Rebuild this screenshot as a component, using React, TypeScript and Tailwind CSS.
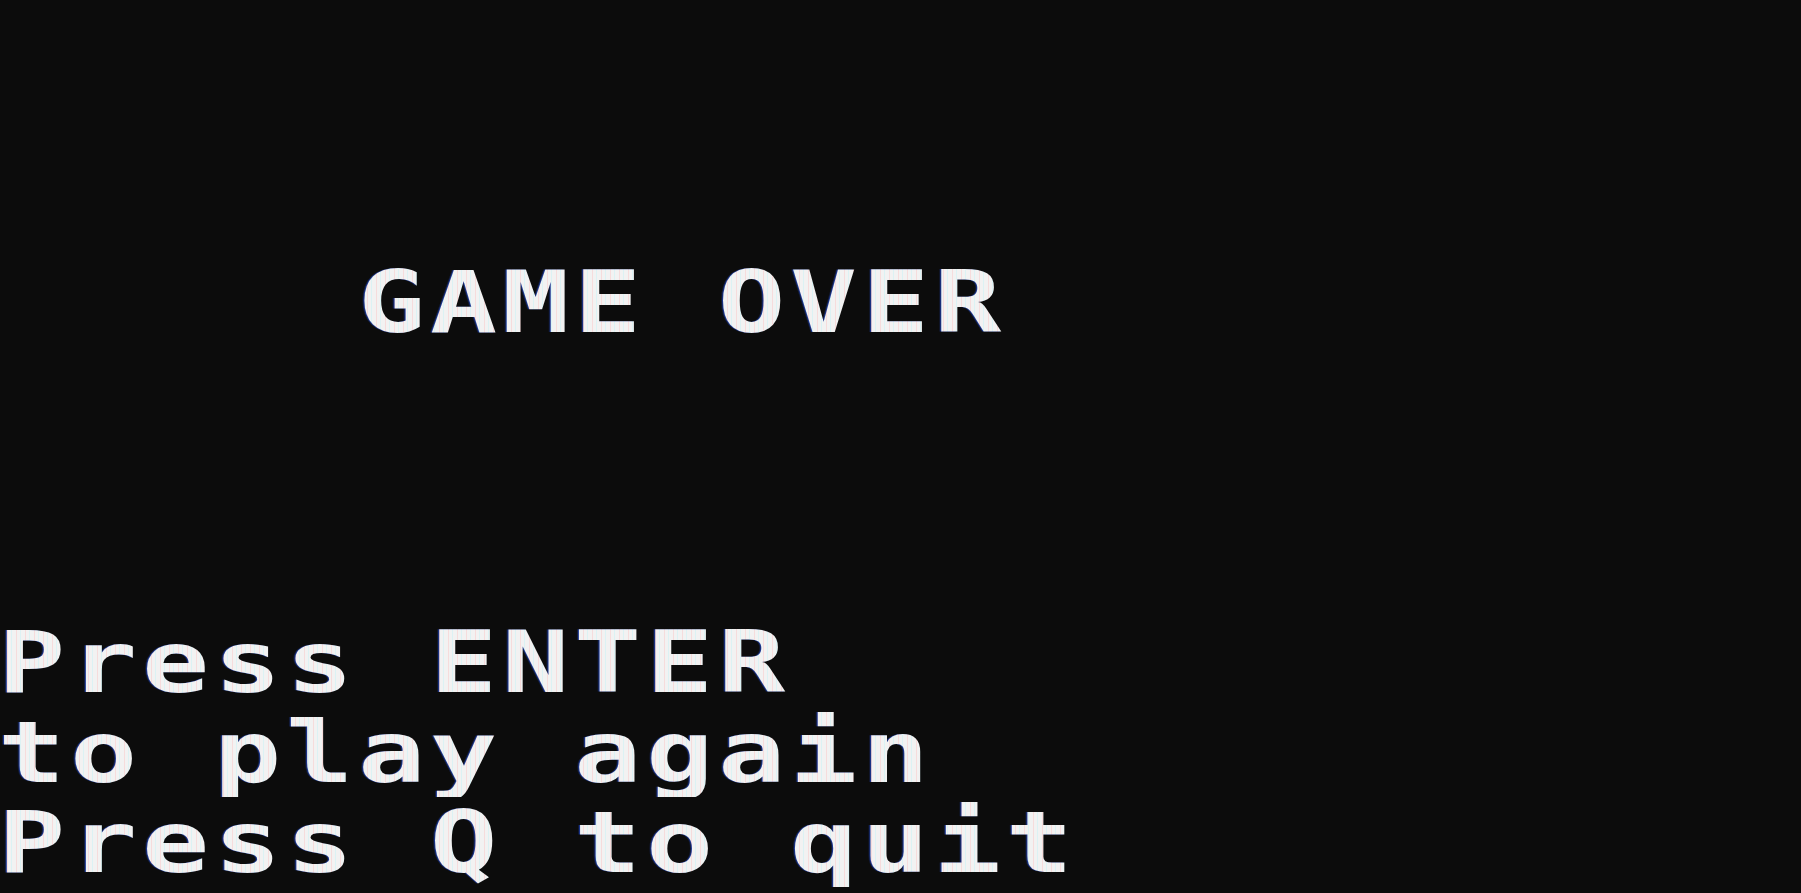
const rows = ["Press ENTER", "to play again", "Press Q to quit"];

function Line({ text }: { text: string }) {
  return (
    <div className="h-[90px] leading-[90px] whitespace-pre origin-left scale-x-[1.3] ml-[-2px] tracking-[3.6px] font-bold text-transparent bg-clip-text bg-[repeating-linear-gradient(90deg,#f6dcdc_0px,#f6dcdc_1px,#f2f2f2_1px,#f2f2f2_3px,#dcf2f4_3px,#dcf2f4_4px,#f2f2f2_4px,#f2f2f2_6.923px)] drop-shadow-[-1px_0_rgba(40,90,255,0.55)]">
      {text}
    </div>
  );
}

export default function App() {
  return (
    <div className="w-[1801px] h-[893px] overflow-hidden bg-[#0c0c0c] text-[86px] font-['DejaVu_Sans_Mono',monospace]">
      {/* title */}
      <div className="pt-[257px] pl-[360px]">
        <Line text="GAME OVER" />
      </div>

      {/* prompts */}
      <div className="mt-[270px]">
        {rows.map((r) => (
          <Line key={r} text={r} />
        ))}
      </div>
    </div>
  );
}
